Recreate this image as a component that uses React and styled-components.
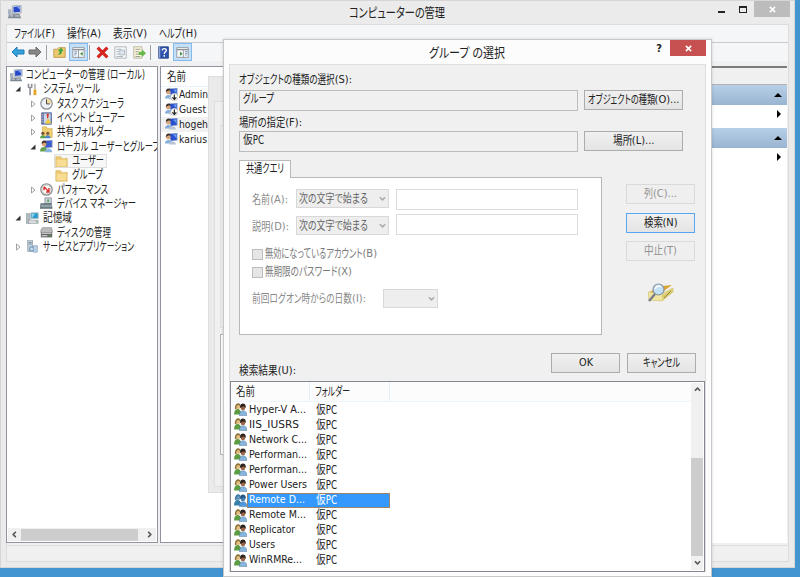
import React, { useLayoutEffect, useRef, useState } from 'react';
import styled, { createGlobalStyle, css } from 'styled-components';

const GlobalStyle = createGlobalStyle`
  * {
    box-sizing: border-box;
  }

  body {
    margin: 0;
    overflow: hidden;
    font-family: 'DejaVu Sans Condensed', 'DejaVu Sans', 'Noto Sans CJK JP', sans-serif;
    font-size: 11px;
    line-height: 14px;
    color: #222;
  }

  svg {
    display: block;
    flex: none;
  }
`;

const Desktop = styled.div`
  position: relative;
  width: 800px;
  height: 577px;
  overflow: hidden;
  background: #4295d1;
`;

/* ---------- text ---------- */

const FitBox = styled.span`
  display: flex;
  flex: none;
  width: ${(p) => p.$w}px;
  white-space: nowrap;
`;

const FitHead = styled.span`
  flex: none;
  font-size: ${(p) => p.$size}px;
  transform-origin: 0 50%;
  font-feature-settings: 'palt';
`;

const FitTail = styled.span`
  flex: none;
  color: inherit;
`;

// UI labels are condensed to the width reserved for them,
// the access key at the end keeps its own width
const Fit = ({ w, size = 12, children }) => {
  const headRef = useRef(null);
  const tailRef = useRef(null);
  const [fit, setFit] = useState({ scale: 1, shift: 0 });
  const [, head, tail] = children.match(/^(.*?)(\([A-Z]\)[:.]*)?$/);
  const cjk = /[^\x20-\x7f]/.test(head);

  useLayoutEffect(() => {
    const natural = headRef.current.getBoundingClientRect().width / fit.scale;
    const tailWidth = tailRef.current ? tailRef.current.getBoundingClientRect().width : 0;
    const scale = (w - tailWidth) / natural;
    if (Math.abs(scale - fit.scale) > 0.001) {
      setFit({ scale, shift: natural * (scale - 1) });
    }
  }, [w, children, fit.scale]);

  return (
    <FitBox $w={w}>
      <FitHead
        ref={headRef}
        $size={cjk ? size : 11}
        style={{ transform: `scaleX(${fit.scale})`, marginRight: fit.shift }}
      >
        {head}
      </FitHead>
      {tail && <FitTail ref={tailRef}>{tail}</FitTail>}
    </FitBox>
  );
};

/* ---------- icons ---------- */

const Svg = ({ s = 13, children }) => (
  <svg width={s} height={s} viewBox="0 0 16 16">{children}</svg>
);

const ComputerIcon = ({ s }) => (
  <Svg s={s}>
    <path d="M5 1l10-1v9l-10 1z" fill="#d5dbe3" stroke="#8993a3" strokeWidth=".7" />
    <path d="M6.3 2.2l7.5-.8v6.4l-7.5.7z" fill="#2848c8" />
    <path d="M10 2l3.800-.5v4z" fill="#7fa5f0" />
    <path d="M0 5h4v6H0z" fill="#a9b3bf" />
    <path d="M1 11l12-1 2 5H0z" fill="#7d8791" />
    <path d="M2 12.500h4M8 12.500h5" stroke="#e4e8ec" />
  </Svg>
);

const ToolsIcon = () => (
  <Svg>
    <path d="M3 1v4l2 1 2-1V1M5 6v9" stroke="#8b8f94" strokeWidth="2" fill="none" />
    <path d="M11 1v7" stroke="#9a9a9a" strokeWidth="1.500" />
    <path d="M11 8v7" stroke="#e3a72b" strokeWidth="3.500" />
  </Svg>
);

const ClockIcon = () => (
  <Svg>
    <circle cx="8" cy="8" r="7" fill="#eef1f5" stroke="#8a8f96" strokeWidth="1.500" />
    <path d="M8 8V1.800A6.200 6.200 0 0 1 14.200 8z" fill="#f2d9a0" />
    <path d="M8 3v5.500h4" stroke="#444" strokeWidth="1.200" fill="none" />
  </Svg>
);

const EventIcon = () => (
  <Svg>
    <path d="M2 1h12v14H2z" fill="#6a86b8" stroke="#4a5f8c" />
    <path d="M5 2h8v12H5z" fill="#cdd8ea" />
    <path d="M8 2h3l-1 6H9z" fill="#d8322a" />
    <path d="M6 14l4-6 4 6z" fill="#f1c93a" />
    <path d="M1 3h3M1 6h3M1 9h3M1 12h3" stroke="#d5a3b0" />
  </Svg>
);

const SharedIcon = () => (
  <Svg>
    <path d="M3 1h5l1 2h6v11H3z" fill="#efcf73" stroke="#c9a347" strokeWidth=".7" />
    <circle cx="3.500" cy="9" r="2" fill="#7a4f35" />
    <path d="M0 15c0-5 7-5 7 0z" fill="#55a450" />
    <circle cx="9.500" cy="9" r="2" fill="#8a5a3c" />
    <path d="M6 15c0-5 7-5 7 0z" fill="#4b87cf" />
  </Svg>
);

const LocalUsersIcon = () => (
  <Svg>
    <path d="M6 1l9-1v9l-9 1z" fill="#3a5ccc" stroke="#a8b2c4" />
    <circle cx="5" cy="5" r="3" fill="#d8a476" />
    <path d="M2 5c0-6 6-5 6-1L5 3z" fill="#3e3024" />
    <path d="M0 14c0-7 9-7 9 0z" fill="#64a04f" />
    <path d="M6 15c0-6 9-6 9 0z" fill="#8bb6df" />
  </Svg>
);

const FolderIcon = () => (
  <Svg>
    <path d="M1 2h6l1 2h7v11H1z" fill="#eecb74" stroke="#d2a950" strokeWidth=".7" />
    <path d="M2 6h12v8H2z" fill="#f7dd94" />
    <path d="M9 3h4v1H9z" fill="#fff" />
  </Svg>
);

const PerformanceIcon = () => (
  <Svg>
    <circle cx="8" cy="8" r="7" fill="#fff" stroke="#8c8c8c" strokeWidth="1.600" />
    <circle cx="8" cy="8" r="5" fill="none" stroke="#c9c9c9" />
    <path d="M5 5v4M5 4.500l5.500 6M11 6v5H7.500" stroke="#d9302c" strokeWidth="1.700" fill="none" />
  </Svg>
);

const DeviceIcon = () => (
  <Svg>
    <path d="M6 1h8v7H6z" fill="#c9d1d8" stroke="#8b959d" />
    <path d="M9 3h2v3H9z" fill="#55a55a" />
    <path d="M1 8h13l1 6H0z" fill="#6f8088" stroke="#4f5b61" strokeWidth=".6" />
    <path d="M1 11h14" stroke="#c5d0d4" />
  </Svg>
);

const StorageIcon = () => (
  <Svg>
    <path d="M0 2h5v12H0z" fill="#b4bcc3" stroke="#858c92" strokeWidth=".6" />
    <path d="M6 1h9v7H6z" fill="#2a9cc9" stroke="#b0b9c0" />
    <path d="M7 2h4L8 7H7z" fill="#8dd4ee" />
    <path d="M3 10h12v4H3z" fill="#dce0e4" stroke="#868c90" strokeWidth=".7" />
    <path d="M12 12h2" stroke="#38a13f" />
  </Svg>
);

const DiskIcon = () => (
  <Svg>
    <path d="M3 2h11l1 3v3H1V5z" fill="#bbb" stroke="#777" strokeWidth=".7" />
    <path d="M1 8h14v6H1z" fill="#666" />
    <path d="M2 9h12M2 12h7" stroke="#e4e4e4" strokeWidth="1.300" />
    <path d="M11 12h2" stroke="#70c36b" />
  </Svg>
);

const ServicesIcon = () => (
  <Svg>
    <path d="M2 0h6v14H2z" fill="#c8d0d8" stroke="#8a949d" strokeWidth=".8" />
    <path d="M3 3h4M3 5h4" stroke="#6c88a0" />
    <circle cx="7" cy="11" r="2.500" fill="#d6e1ec" stroke="#6b9cc3" strokeWidth="1.400" />
    <path d="M9 7h5v8H9z" fill="#b9d1e6" stroke="#7592ab" strokeWidth=".7" />
  </Svg>
);

const UserIcon = ({ disabled }) => (
  <Svg s={13}>
    <path d="M5 1l10-1v9l-8 1z" fill="#2850cf" stroke="#a9b7d0" />
    <path d="M10 2l4-.5v5z" fill="#6ea1ec" />
    <circle cx="4" cy="5" r="3" fill="#d6a47c" />
    <path d="M1 5c0-6 6-5 6-2L4 3z" fill="#3b3129" />
    <path d="M0 13c0-6 8-6 9 0z" fill="#82add9" />
    <path d="M5 11h7l2 3H5z" fill="#b7c4d6" />
    {disabled && (
      <>
        <circle cx="11.500" cy="11" r="4.500" fill="#fff" stroke="#aaa" strokeWidth=".7" />
        <path d="M11.500 8v6M9 11.500l2.500 2.500 2.500-2.500" stroke="#222" strokeWidth="1.500" fill="none" />
      </>
    )}
  </Svg>
);

const GroupIcon = ({ selected }) => (
  <Svg s={13}>
    <circle cx="5" cy="4.500" r="3" fill={selected ? '#6794bb' : '#e3bd83'} />
    <path d="M1 7c0-9 8-8 7-3L5 2 3 4v4z" fill={selected ? '#3b77a8' : '#8c7136'} />
    <path d="M0 14c0-9 9-9 9 0z" fill={selected ? '#357fac' : '#5d9c43'} />
    <circle cx="11" cy="6" r="2.800" fill={selected ? '#477cae' : '#9f6448'} />
    <path d="M7.500 6c-1-7 8-7 7 0L12 4z" fill={selected ? '#235786' : '#2d2420'} />
    <path d="M6.500 15.500c0-8 9.500-8 9.500 0z" fill={selected ? '#4c9be0' : '#86b6e0'} stroke="#4c7396" strokeWidth=".6" />
  </Svg>
);

const ArrowIcon = ({ color, edge, flip }) => (
  <svg width="14" height="12" viewBox="0 0 14 12">
    <path
      d="M1 6l5-5v3h7v4H6v3z"
      transform={flip ? 'matrix(-1 0 0 1 14 0)' : undefined}
      fill={color}
      stroke={edge}
    />
  </svg>
);

const FolderUpIcon = () => (
  <Svg>
    <path d="M1 4h5l1-2h8v12H1z" fill="#edc96f" stroke="#b99549" />
    <path d="M5 10c3 0 3-2 3-4H6l4-4 3 4h-2c0 4-2 5-6 4z" fill="#3fa53d" />
  </Svg>
);

const PaneIcon = ({ right }) => (
  <Svg>
    <path d="M1 2h14v12H1z" fill="#f6f6f6" stroke="#888e96" />
    <path d="M1 4.500h14" stroke="#888e96" strokeWidth="1.500" />
    <path d={right ? 'M9 5v9' : 'M8 5v9'} stroke="#888e96" />
    <path d={right ? 'M5 7l3 2.500L5 12z' : 'M13 7l-3 2.500 3 2.500z'} fill="#37883a" />
    <path d={right ? 'M11 7h3M11 9h3M11 11h2' : 'M3 7h3M3 9h3M3 11h2'} stroke="#5d82b4" />
  </Svg>
);

const DeleteIcon = () => (
  <Svg>
    <path d="M2 2l12 12M14 2L2 14" stroke="#d42420" strokeWidth="3.800" />
  </Svg>
);

const PropertiesIcon = () => (
  <Svg>
    <path d="M1 1h14v14H1z" fill="#fafafa" stroke="#a6aaad" />
    <path d="M3 4h6M3 7h3M3 10h3M3 13h8" stroke="#96a2ad" />
    <path d="M7 5h6v6H7z" fill="#dce3eb" stroke="#a6b4c2" />
  </Svg>
);

const ExportIcon = () => (
  <Svg>
    <path d="M1 1h10v14H1z" fill="#fff9dd" stroke="#aba98e" />
    <path d="M3 4h6M3 7h4M3 10h4M3 13h6" stroke="#7d8389" />
    <path d="M7 7h4V4l5 5-5 4.500V11H7z" fill="#67b84b" />
  </Svg>
);

const HelpIcon = () => (
  <Svg>
    <path d="M2 1h12v14H2z" fill="#2e53ae" stroke="#1f3978" />
    <path d="M2 1h2v14H2z" fill="#8ea6d6" />
    <path d="M6.500 5.500c0-3 5-3 5-.3 0 2-2.500 2-2.500 4.500M9 11.200v2" stroke="#fff" strokeWidth="1.700" fill="none" />
  </Svg>
);

const SearchBoxIcon = () => (
  <svg width="26" height="20" viewBox="0 0 26 20">
    <path d="M1 9l14-6 9-1-11 8z" fill="#dba62f" />
    <path d="M0 9l13 2 12-6v4L14 18 1 17z" fill="#f0e6a0" stroke="#cabd6c" strokeWidth=".6" />
    <path d="M14 12v6l11-9V5z" fill="#dccd74" />
    <path d="M16 15l7-7" stroke="#8d8142" strokeWidth="1" />
    <path d="M7 11l-6 7" stroke="#787e85" strokeWidth="2.400" />
    <circle cx="10.500" cy="6.500" r="5.500" fill="#c0e1f6" stroke="#8a939c" strokeWidth="1.200" />
    <path d="M7 6c1-3 4-3.500 6-2" stroke="#fff" strokeWidth="1.500" fill="none" />
  </svg>
);

const Chevron = ({ dir, color = '#555', size = 7 }) => {
  const paths = {
    left: 'M5.500 1L2.500 4l3 3',
    right: 'M2.500 1l3 3-3 3',
    up: 'M1 5.500l3-3 3 3',
    down: 'M1 2.500l3 3 3-3',
  };
  return (
    <svg width={size} height={size} viewBox="0 0 8 8">
      <path d={paths[dir]} stroke={color} strokeWidth="1.800" fill="none" />
    </svg>
  );
};

const CrossMark = () => (
  <svg width="7" height="7" viewBox="0 0 8 8">
    <path d="M1 1l6 6M7 1L1 7" stroke="#fff" strokeWidth="1.800" />
  </svg>
);

/* ---------- management window ---------- */

const MainWindow = styled.div`
  position: absolute;
  left: 0;
  top: 0;
  width: 795px;
  height: 568px;
  padding: 0 5px 5px;
  display: flex;
  flex-direction: column;
  background: #ebebeb;
  border: 1px solid #d6d6d6;
`;

const MainTitle = styled.div`
  display: flex;
  height: 23px;
  flex: none;
  padding: 4px 0 0 2px;
`;

const MainTitleText = styled.div`
  margin-left: 327px;
  padding-top: 1px;
`;

const CaptionButtons = styled.div`
  display: flex;
  margin: -4px -1px 0 auto;
`;

const CaptionButton = styled.div`
  width: ${(p) => p.$w}px;
  height: 16px;
  display: flex;
  align-items: center;
  justify-content: center;
  background: ${(p) => p.$bg || 'transparent'};
`;

const MinimizeMark = styled.span`
  width: 7px;
  height: 2px;
  margin-top: 5px;
  background: #222;
`;

const MaximizeMark = styled.span`
  width: 8px;
  height: 7px;
  border: 1px solid #222;
  border-top-width: 2px;
`;

const MainClient = styled.div`
  flex: 1;
  display: flex;
  flex-direction: column;
  border: 1px solid #dcdcdc;
  background: #f0f0f0;
`;

const MenuBar = styled.div`
  display: flex;
  flex: none;
  gap: 12px;
  height: 18px;
  padding: 2px 0 0 7px;
  background: #f5f6f8;
  border-bottom: 1px solid #c9cbce;
`;

const ToolBar = styled.div`
  display: flex;
  flex: none;
  align-items: center;
  height: 18px;
  padding-left: 3px;
  background: #f5f6f8;
`;

const Tool = styled.span`
  display: flex;
  align-items: center;
  justify-content: center;
  width: ${(p) => p.$w || 19}px;
  height: 18px;
  ${(p) =>
    p.$active &&
    css`
      background: #c4e0f8;
      border: 1px solid #84bbec;
    `}
`;

const ToolSeparator = styled.span`
  width: 1px;
  height: 15px;
  margin: 0 ${(p) => p.$right}px 0 ${(p) => p.$left}px;
  background: #a0a0a0;
`;

const Panes = styled.div`
  display: flex;
  flex: none;
  height: 477px;
  margin-top: 5px;
  margin-left: -1px;
`;

const Pane = styled.div`
  width: ${(p) => p.$w}px;
  margin-right: 2px;
  display: flex;
  flex-direction: column;
  overflow: hidden;
  background: #fff;
  border: 1px solid #92959f;
`;

const Tree = styled.div`
  flex: 1;
  padding: 1px 0 0 3px;
`;

const TreeRow = styled.div`
  display: flex;
  align-items: center;
  height: 14.32px;
  padding-left: ${(p) => p.$indent}px;
`;

const Expander = styled.span`
  display: flex;
  width: ${(p) => p.$w}px;
  flex: none;
`;

const TreeLabel = styled.span`
  display: flex;
  align-items: center;
  gap: ${(p) => p.$gap}px;
  ${(p) =>
    p.$selected &&
    css`
      margin-left: -1px;
      padding: 0 3px 0 1px;
      background: #f7f7f7;
      outline: 1px solid #dedede;
      outline-offset: -1px;
    `}
`;

const HorizontalScroll = styled.div`
  display: flex;
  align-items: center;
  height: 13px;
  margin: 0 1px 1px;
  padding: 0 3px;
  background: #f0f0f0;
`;

const HorizontalThumb = styled.span`
  width: 117px;
  height: 12px;
  margin: 0 8px 0 3px;
  background: #cdcdcd;
`;

const UserHeader = styled.div`
  height: 20px;
  padding: 3px 6px;
  border-bottom: 1px solid #eaf3fa;
`;

const UserRow = styled.div`
  display: flex;
  align-items: center;
  gap: 1px;
  height: 15px;
  padding-left: 4px;
  background: ${(p) => (p.$active ? '#f1f1f1' : '#fff')};
`;

const ActionsPane = styled.div`
  flex: 1;
  margin-left: 2px;
  margin-right: 1px;
  background: #fff;
  border-top: 2px solid #7c7c7c;
`;

const ActionsTitle = styled.div`
  height: 17px;
  background: #f0f0f0;
  border-bottom: 1px solid #b4b4b4;
`;

const ActionsHeader = styled.div`
  display: flex;
  align-items: center;
  justify-content: flex-end;
  height: 20px;
  margin-top: ${(p) => p.$top}px;
  padding-right: 5px;
  background: linear-gradient(#b8cfe8, #99b4d1);
`;

const ActionsItem = styled.div`
  display: flex;
  justify-content: flex-end;
  height: 19px;
  padding: 5px 6px 0 0;
`;

const StatusBar = styled.div`
  flex: 1;
  margin-top: 2px;
  border-top: 1px solid #dedede;
`;

const GhostDialog = styled.div`
  position: absolute;
  left: 208px;
  top: 76px;
  width: 300px;
  height: 417px;
  padding: 24px 5px 5px;
  background: #eaeaea;
  border: 1px solid #dedede;
`;

const GhostClient = styled.div`
  height: 386px;
  padding: 23px 5px;
  background: #f0f0f0;
  border: 1px solid #dedede;
`;

const GhostPanel = styled.div`
  height: ${(p) => p.$h}px;
  margin-bottom: 6px;
  background: ${(p) => p.$bg};
  border: 1px solid ${(p) => p.$line};
`;

/* ---------- selection dialog ---------- */

const Dialog = styled.div`
  position: absolute;
  left: 223px;
  top: 39px;
  width: 489px;
  height: 538px;
  padding: 0 5px 4px;
  display: flex;
  flex-direction: column;
  background: #fcfcfc;
  border: 1px solid #c8c8c8;
  box-shadow: 0 0 3px rgba(0, 0, 0, 0.15);
`;

const DialogTitle = styled.div`
  display: flex;
  flex: none;
  height: 24px;
`;

const DialogTitleText = styled.div`
  margin-left: 200px;
  padding-top: 6px;
`;

const HelpMark = styled.div`
  margin-left: auto;
  padding: 2px 8px 0 0;
  font-weight: bold;
`;

const DialogBody = styled.div`
  flex: 1;
  display: flex;
  flex-direction: column;
  background: #f0f0f0;
  border: 1px solid #dedede;
  border-bottom: 0;
`;

const Caption = styled.div`
  height: ${(p) => p.$h}px;
  padding: ${(p) => p.$top}px 0 0 9px;
  flex: none;
`;

const FieldRow = styled.div`
  display: flex;
  flex: none;
  gap: 6px;
  height: 21px;
  padding-left: 9px;
`;

const ReadOnlyField = styled.div`
  width: 339px;
  height: 21px;
  padding: 1px 3px;
  border: 1px solid #bcbcbc;
`;

const Button = styled.div`
  display: flex;
  flex: none;
  align-items: center;
  justify-content: center;
  width: ${(p) => p.$w || 69}px;
  height: 20px;
  color: ${(p) => (p.$disabled ? '#929292' : '#222')};
  background: ${(p) => (p.$disabled ? '#efefef' : 'linear-gradient(#f0f0f0, #e4e4e4)')};
  border: 1px solid ${(p) => (p.$disabled ? '#dadada' : p.$primary ? '#58a6f2' : '#acacac')};
`;

const QueryArea = styled.div`
  display: flex;
  flex: none;
  height: 201px;
  padding: 8px 0 0 9px;
`;

const TabGroup = styled.div`
  width: 363px;
`;

const Tab = styled.div`
  position: relative;
  width: 52px;
  height: 18px;
  padding: 1px 6px;
  margin-bottom: -1px;
  background: #fff;
  border: 1px solid #b8b8b8;
  border-bottom: 0;
`;

const TabPanel = styled.div`
  height: 158px;
  padding: 11px 12px;
  background: #fff;
  border: 1px solid #b8b8b8;
  color: #8a8a8a;
`;

const QueryRow = styled.div`
  display: flex;
  align-items: flex-start;
  height: ${(p) => p.$h}px;
`;

const QueryLabel = styled.div`
  width: ${(p) => p.$w}px;
  padding-top: ${(p) => p.$top}px;
`;

const Select = styled.div`
  display: flex;
  align-items: center;
  justify-content: space-between;
  width: ${(p) => p.$w}px;
  height: 19px;
  margin-top: ${(p) => p.$top || 0}px;
  padding: 0 2px;
  color: #666;
  background: #eee;
  border: 1px solid #d8d8d8;
`;

const TextInput = styled.div`
  width: 182px;
  height: 21px;
  margin-left: 7px;
  border: 1px solid #dcdcdc;
`;

const CheckRow = styled.div`
  display: flex;
  align-items: center;
  gap: 2px;
  height: 18px;
  color: #7a7a7a;
`;

const CheckBox = styled.span`
  width: 11px;
  height: 11px;
  background: #e6e6e6;
  border: 1px solid #bdbdbd;
`;

const SideButtons = styled.div`
  display: flex;
  flex-direction: column;
  gap: 8.5px;
  margin: 24px 0 0 24px;
`;

const SearchPicture = styled.div`
  margin: 13px 0 0 22px;
`;

const Footer = styled.div`
  display: flex;
  flex: none;
  align-items: flex-start;
  gap: 7px;
  height: 28px;
  padding-left: 9px;
`;

const ResultCaption = styled.div`
  width: 305px;
  padding-top: 11px;
`;

const ResultList = styled.div`
  display: flex;
  flex: none;
  height: 191px;
  background: #fff;
  border: 1px solid #828790;
`;

const ResultTable = styled.div`
  flex: 1;
`;

const ResultHeader = styled.div`
  display: flex;
  height: 20px;
  background: #fcfcfc;
  border-bottom: 1px solid #ecf5fb;
`;

const HeaderCell = styled.div`
  width: ${(p) => p.$w}px;
  padding: 3px 0 0 5px;
  border-right: 1px solid #e4eef6;
`;

const ResultRow = styled.div`
  display: flex;
  align-items: center;
  height: 15.1px;
  padding-left: 3px;
`;

const ResultCells = styled.div`
  display: flex;
  align-items: center;
  width: 143px;
  height: 15px;
  padding-left: 2px;
  ${(p) =>
    p.$selected &&
    css`
      color: #fff;
      background: #3399ff;
      outline: 1px solid #a08468;
      outline-offset: -1px;
    `}
`;

const NameCell = styled.div`
  width: 67px;
`;

const VerticalScroll = styled.div`
  display: flex;
  flex-direction: column;
  align-items: center;
  width: 12px;
  margin: 1px 1px 1px 0;
  padding: 3px 0;
  background: #f0f0f0;
`;

const VerticalThumb = styled.span`
  width: 12px;
  height: 98px;
  margin: 65px 0 3px;
  background: #cdcdcd;
`;

const treeItems = [
  { text: 'コンピューターの管理 (ローカル)', w: 119, depth: 0, icon: ComputerIcon },
  { text: 'システム ツール', w: 57, depth: 1, icon: ToolsIcon, state: 'open' },
  { text: 'タスク スケジューラ', w: 67, depth: 2, icon: ClockIcon, state: 'closed' },
  { text: 'イベント ビューアー', w: 68, depth: 2, icon: EventIcon, state: 'closed' },
  { text: '共有フォルダー', w: 55, depth: 2, icon: SharedIcon, state: 'closed' },
  { text: 'ローカル ユーザーとグループ', w: 103, depth: 2, icon: LocalUsersIcon, state: 'open' },
  { text: 'ユーザー', w: 32, depth: 3, icon: FolderIcon, selected: true },
  { text: 'グループ', w: 31, depth: 3, icon: FolderIcon },
  { text: 'パフォーマンス', w: 51, depth: 2, icon: PerformanceIcon, state: 'closed' },
  { text: 'デバイス マネージャー', w: 79, depth: 2, icon: DeviceIcon },
  { text: '記憶域', w: 29, depth: 1, icon: StorageIcon, state: 'open' },
  { text: 'ディスクの管理', w: 54, depth: 2, icon: DiskIcon },
  { text: 'サービスとアプリケーション', w: 91, depth: 1, icon: ServicesIcon, state: 'closed' },
];

const indents = [0, 5, 20, 45];

const users = [
  { name: 'Admin', w: 29, disabled: true },
  { name: 'Guest', w: 27, disabled: true },
  { name: 'hogeh', w: 29, active: true },
  { name: 'karius', w: 28 },
];

const results = [
  ['Hyper-V A...', 57],
  ['IIS_IUSRS', 50],
  ['Network C...', 58],
  ['Performan...', 58],
  ['Performan...', 58],
  ['Power Users', 58],
  ['Remote D...', 56],
  ['Remote M...', 57],
  ['Replicator', 46],
  ['Users', 26],
  ['WinRMRe...', 53],
];

const ExpanderMark = ({ state }) => (
  <svg width="6" height="8" viewBox="0 0 6 8">
    {state === 'open' && <path d="M5.500 1.500v5h-5z" fill="#333" />}
    {state === 'closed' && <path d="M1.500 1l3.500 3-3.500 3z" fill="#fff" stroke="#a0a0a0" />}
  </svg>
);

const TreeItem = ({ item }) => {
  const Icon = item.icon;
  return (
    <TreeRow $indent={indents[item.depth]}>
      {(item.depth === 1 || item.depth === 2) && (
        <Expander $w={item.depth === 1 ? 11 : 10}>
          <ExpanderMark state={item.state} />
        </Expander>
      )}
      <TreeLabel $gap={item.depth === 0 ? 3 : 4} $selected={item.selected}>
        <Icon />
        <Fit w={item.w}>{item.text}</Fit>
      </TreeLabel>
    </TreeRow>
  );
};

const ManagementWindow = () => (
  <MainWindow>
    <MainTitle>
      <ComputerIcon s={14} />
      <MainTitleText><Fit w={96} size={13}>コンピューターの管理</Fit></MainTitleText>
      <CaptionButtons>
        <CaptionButton $w={20}><MinimizeMark /></CaptionButton>
        <CaptionButton $w={23}><MaximizeMark /></CaptionButton>
        <CaptionButton $w={36} $bg="#bcbcbc"><CrossMark /></CaptionButton>
      </CaptionButtons>
    </MainTitle>
    <MainClient>
      <MenuBar>
        <Fit w={41}>ファイル(F)</Fit>
        <Fit w={34}>操作(A)</Fit>
        <Fit w={34}>表示(V)</Fit>
        <Fit w={38}>ヘルプ(H)</Fit>
      </MenuBar>
      <ToolBar>
        <Tool $w={15}><ArrowIcon color="#31a4df" edge="#2579b4" /></Tool>
        <Tool $w={20}><ArrowIcon color="#888" edge="#6a6a6a" flip /></Tool>
        <ToolSeparator $left={1} $right={3} />
        <Tool><FolderUpIcon /></Tool>
        <Tool $active><PaneIcon /></Tool>
        <ToolSeparator $left={1} $right={3} />
        <Tool><DeleteIcon /></Tool>
        <Tool $w={17}><PropertiesIcon /></Tool>
        <Tool $w={20}><ExportIcon /></Tool>
        <ToolSeparator $left={1} $right={3} />
        <Tool><HelpIcon /></Tool>
        <Tool $active><PaneIcon right /></Tool>
      </ToolBar>
      <Panes>
        <Pane $w={152}>
          <Tree>
            {treeItems.map((item) => (
              <TreeItem key={item.text} item={item} />
            ))}
          </Tree>
          <HorizontalScroll>
            <Chevron dir="left" />
            <HorizontalThumb />
            <Chevron dir="right" />
          </HorizontalScroll>
        </Pane>
        <Pane $w={400}>
          <UserHeader><Fit w={19}>名前</Fit></UserHeader>
          {users.map((user) => (
            <UserRow key={user.name} $active={user.active}>
              <UserIcon disabled={user.disabled} />
              <Fit w={user.w}>{user.name}</Fit>
            </UserRow>
          ))}
        </Pane>
        <ActionsPane>
          <ActionsTitle />
          <ActionsHeader $top={0}>
            <svg width="8" height="4" viewBox="0 0 8 4"><path d="M0 4l4-4 4 4z" fill="#000" /></svg>
          </ActionsHeader>
          <ActionsItem>
            <svg width="4" height="8" viewBox="0 0 4 8"><path d="M0 0l4 4-4 4z" fill="#000" /></svg>
          </ActionsItem>
          <ActionsHeader $top={4}>
            <svg width="8" height="4" viewBox="0 0 8 4"><path d="M0 4l4-4 4 4z" fill="#000" /></svg>
          </ActionsHeader>
          <ActionsItem>
            <svg width="4" height="8" viewBox="0 0 4 8"><path d="M0 0l4 4-4 4z" fill="#000" /></svg>
          </ActionsItem>
        </ActionsPane>
      </Panes>
      <StatusBar />
    </MainClient>
  </MainWindow>
);

const GroupDialog = () => (
  <Dialog>
    <DialogTitle>
      <DialogTitleText><Fit w={76} size={13}>グループ の選択</Fit></DialogTitleText>
      <HelpMark>?</HelpMark>
      <CaptionButton $w={36} $bg="#c75050"><CrossMark /></CaptionButton>
    </DialogTitle>
    <DialogBody>
      <Caption $h={25} $top={8}><Fit w={113}>オブジェクトの種類の選択(S):</Fit></Caption>
      <FieldRow>
        <ReadOnlyField><Fit w={31}>グループ</Fit></ReadOnlyField>
        <Button $w={99}><Fit w={92}>オブジェクトの種類(O)...</Fit></Button>
      </FieldRow>
      <Caption $h={20} $top={5}><Fit w={63}>場所の指定(F):</Fit></Caption>
      <FieldRow>
        <ReadOnlyField><Fit w={21}>仮PC</Fit></ReadOnlyField>
        <Button $w={99}><Fit w={42}>場所(L)...</Fit></Button>
      </FieldRow>
      <QueryArea>
        <TabGroup>
          <Tab><Fit w={38}>共通クエリ</Fit></Tab>
          <TabPanel>
            <QueryRow $h={25}>
              <QueryLabel $w={44} $top={4}><Fit w={36}>名前(A):</Fit></QueryLabel>
              <Select $w={93}>
                <Fit w={69}>次の文字で始まる</Fit>
                <Chevron dir="down" color="#aaa" />
              </Select>
              <TextInput />
            </QueryRow>
            <QueryRow $h={31}>
              <QueryLabel $w={44} $top={6}><Fit w={37}>説明(D):</Fit></QueryLabel>
              <Select $w={93} $top={2}>
                <Fit w={69}>次の文字で始まる</Fit>
                <Chevron dir="down" color="#aaa" />
              </Select>
              <TextInput />
            </QueryRow>
            <CheckRow>
              <CheckBox />
              <Fit w={112}>無効になっているアカウント(B)</Fit>
            </CheckRow>
            <CheckRow>
              <CheckBox />
              <Fit w={87}>無期限のパスワード(X)</Fit>
            </CheckRow>
            <QueryRow $h={30}>
              <QueryLabel $w={131} $top={11}><Fit w={114}>前回ログオン時からの日数(I):</Fit></QueryLabel>
              <Select $w={55} $top={8}>
                <span />
                <Chevron dir="down" color="#aaa" />
              </Select>
            </QueryRow>
          </TabPanel>
        </TabGroup>
        <SideButtons>
          <Button $disabled><Fit w={33}>列(C)...</Fit></Button>
          <Button $primary><Fit w={34}>検索(N)</Fit></Button>
          <Button $disabled><Fit w={33}>中止(T)</Fit></Button>
          <SearchPicture><SearchBoxIcon /></SearchPicture>
        </SideButtons>
      </QueryArea>
      <Footer>
        <ResultCaption><Fit w={57}>検索結果(U):</Fit></ResultCaption>
        <Button><Fit w={14}>OK</Fit></Button>
        <Button><Fit w={37}>キャンセル</Fit></Button>
      </Footer>
      <ResultList>
        <ResultTable>
          <ResultHeader>
            <HeaderCell $w={79}><Fit w={19}>名前</Fit></HeaderCell>
            <HeaderCell $w={80}><Fit w={35}>フォルダー</Fit></HeaderCell>
          </ResultHeader>
          {results.map(([name, w], i) => (
            <ResultRow key={i}>
              <GroupIcon selected={i === 6} />
              <ResultCells $selected={i === 6}>
                <NameCell><Fit w={w}>{name}</Fit></NameCell>
                <Fit w={21}>仮PC</Fit>
              </ResultCells>
            </ResultRow>
          ))}
        </ResultTable>
        <VerticalScroll>
          <Chevron dir="up" />
          <VerticalThumb />
          <Chevron dir="down" />
        </VerticalScroll>
      </ResultList>
    </DialogBody>
  </Dialog>
);

const App = () => {
  return (
    <Desktop>
      <GlobalStyle />
      <ManagementWindow />
      <GhostDialog>
        <GhostClient>
          <GhostPanel $h={203} $bg="#f0f0f0" $line="#e2e2e2" />
          <GhostPanel $h={121} $bg="#fff" $line="#b4b4b4" />
        </GhostClient>
      </GhostDialog>
      <GroupDialog />
    </Desktop>
  );
};

export default App;
